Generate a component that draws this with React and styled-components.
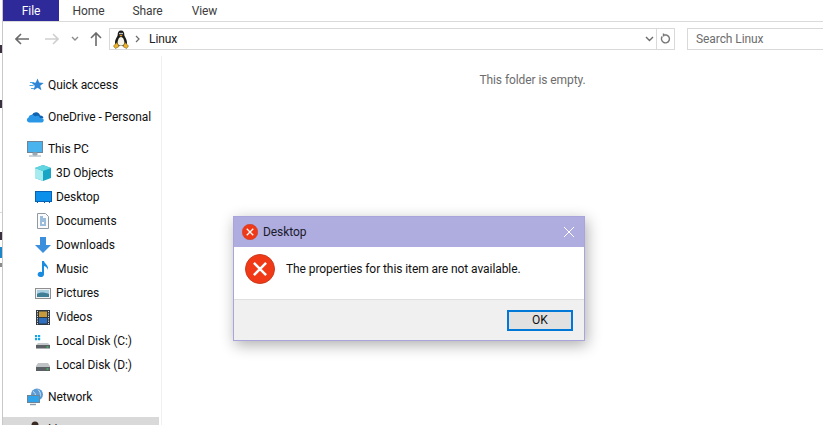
import React from 'react';
import styled, { createGlobalStyle } from 'styled-components';

const Global = createGlobalStyle`
  html, body { margin: 0; padding: 0; background: #fff; overflow: hidden; }
  body { font-family: Roboto, "Noto Sans", "Liberation Sans", sans-serif; letter-spacing: -0.08px; }
  #root { width: 823px; height: 425px; }
`;

const Page = styled.div`
  width: 823px;
  height: 425px;
  position: relative;
  overflow: hidden;
  background: #fff;
  display: flex;
`;

/* slivers of the window behind that stick out on the left */
const Behind = styled.div`
  width: 2px;
  flex: none;
  border-right: 1px solid #c8c8c8;
  background:
    linear-gradient(#3a3040, #3a3040) 0 45px / 2px 8px no-repeat,
    linear-gradient(#3a3040, #3a3040) 0 100px / 2px 8px no-repeat,
    linear-gradient(#dcdcdc, #dcdcdc) 0 212px / 2px 1px no-repeat,
    linear-gradient(#3a3040, #3a3040) 0 232px / 2px 8px no-repeat,
    linear-gradient(#1d86c8, #1d86c8) 0 247px / 2px 11px no-repeat,
    linear-gradient(#8a8a8a, #8a8a8a) 0 263px / 2px 4px no-repeat,
    #fff;
`;

const Explorer = styled.div`
  flex: 1;
  min-width: 0;
  display: flex;
  flex-direction: column;
`;

const Ribbon = styled.div`
  height: 21px;
  display: flex;
  border-bottom: 1px solid #dadada;
`;

const RibbonTab = styled.div`
  width: ${p => p.$w}px;
  display: flex;
  align-items: center;
  justify-content: center;
  font-size: 12px;
  color: ${p => (p.$active ? '#fff' : '#3c3c3c')};
  background: ${p => (p.$active ? '#2e2a9a' : 'transparent')};
`;

const NavBar = styled.div`
  height: 34px;
  display: flex;
  align-items: center;
  padding-left: 1px;
`;

const NavButton = styled.div`
  width: ${p => p.$w}px;
  display: flex;
  align-items: center;
  justify-content: center;
`;

const AddressBox = styled.div`
  width: 566px;
  height: 22px;
  margin-left: 3px;
  box-sizing: border-box;
  border: 1px solid #d9d9d9;
  display: flex;
  align-items: center;
  padding-left: 3px;
`;

const TuxIcon = styled.svg`
  width: 16px;
  height: 19px;
  flex: none;
`;

const CrumbArrow = styled.svg`
  width: 5px;
  height: 8px;
  flex: none;
  margin-left: 6px;
`;

const Crumb = styled.span`
  font-size: 12px;
  color: #222;
  margin-left: 9px;
`;

const AddressEnd = styled.div`
  margin-left: auto;
  display: flex;
  align-items: center;
  height: 100%;
`;

const RefreshCell = styled.div`
  width: 17px;
  height: 100%;
  border-left: 1px solid #d9d9d9;
  margin-left: 2px;
  display: flex;
  align-items: center;
  justify-content: center;
`;

const SearchBox = styled.div`
  flex: 1;
  height: 22px;
  margin-left: 12px;
  box-sizing: border-box;
  border: 1px solid #d9d9d9;
  border-right: none;
  display: flex;
  align-items: center;
  padding-left: 8px;
  font-size: 12px;
  color: #6d6d6d;
`;

const Body = styled.div`
  flex: 1;
  display: flex;
  min-height: 0;
`;

const Sidebar = styled.div`
  width: 159px;
  flex: none;
  border-right: 1px solid #f0f0f0;
  padding-top: 17px;
  box-sizing: border-box;
  overflow: hidden;
`;

const NavItem = styled.div`
  height: 24px;
  display: flex;
  align-items: center;
  padding-left: ${p => (p.$child ? 31 : 23)}px;
  margin-top: ${p => p.$gap || 0}px;
  font-size: 12px;
  color: #111;
  white-space: nowrap;
  background: ${p => (p.$selected ? '#d9d9d9' : 'transparent')};
  width: 156px;
  box-sizing: border-box;
`;

const NavIcon = styled.svg`
  width: 18px;
  height: 18px;
  flex: none;
  margin-right: 4px;
`;

const Content = styled.div`
  flex: 1;
  display: flex;
  justify-content: center;
  padding-top: 17px;
  padding-left: 80px;
  font-size: 12px;
  color: #6d6d6d;
`;

const Dialog = styled.div`
  position: absolute;
  left: 233px;
  top: 216px;
  width: 352px;
  height: 125px;
  box-sizing: border-box;
  border: 1px solid #a9a5dc;
  background: #fff;
  display: flex;
  flex-direction: column;
  box-shadow: 2px 4px 14px rgba(0, 0, 0, 0.32);
`;

const DialogTitle = styled.div`
  height: 30px;
  background: #afacdf;
  display: flex;
  align-items: center;
  padding: 0 9px 0 8px;
  font-size: 12px;
  color: #1a1a2a;
  gap: 5px;
`;

const CloseButton = styled.svg`
  width: 12px;
  height: 12px;
  margin-left: auto;
`;

const DialogBody = styled.div`
  height: 52px;
  display: flex;
  align-items: center;
  padding-left: 11px;
  gap: 11px;
  font-size: 12px;
  color: #111;
  padding-bottom: 8px;
  box-sizing: border-box;
`;

const DialogFooter = styled.div`
  flex: 1;
  background: #f0f0f0;
  border-top: 1px solid #dfdfdf;
  display: flex;
  align-items: center;
  justify-content: flex-end;
  padding-right: 11px;
`;

const OkButton = styled.button`
  width: 66px;
  height: 21px;
  box-sizing: border-box;
  border: 2px solid #0078d7;
  background: #e1e1e1;
  font: inherit;
  font-size: 12px;
  color: #111;
  padding: 0;
`;

const ErrorSvg = styled.svg`
  flex: none;
  width: ${p => p.$size}px;
  height: ${p => p.$size}px;
`;

const ErrorIcon = ({ size }) => (
  <ErrorSvg $size={size} viewBox="0 0 32 32">
    <circle cx="16" cy="16" r="15.5" fill="#f03a17" stroke="#c9371c" />
    <path d="M9.5 9.5 L22.5 22.5 M22.5 9.5 L9.5 22.5" stroke="#fff" strokeWidth="2.6" />
  </ErrorSvg>
);

const Tux = () => (
  <TuxIcon viewBox="0 0 16 19">
    <path d="M8 .5c2.4 0 3.3 2 3.3 4.2 0 2 2.7 4 2.7 8 0 2-1.5 3.3-6 3.3s-6-1.3-6-3.3c0-4 2.7-6 2.7-8C4.7 2.500 5.600.5 8 .5z" fill="#1c1c1c" />
    <path d="M8 7c1.900 0 3.400 3 3.400 5.800 0 2-1.400 3-3.400 3s-3.400-1-3.400-3C4.600 10 6.100 7 8 7z" fill="#f6f3e8" />
    <circle cx="7" cy="3.600" r=".8" fill="#fff" />
    <circle cx="9" cy="3.600" r=".8" fill="#fff" />
    <path d="M6.300 5h3.400L8 6.800z" fill="#e8a31a" />
    <path d="M.5 16l3.500-3.500 2 4-3.500 2zM15.500 16L12 12.500l-2 4 3.500 2z" fill="#eeb32a" stroke="#7b5c0e" strokeWidth=".6" />
  </TuxIcon>
);

const icons = {
  quick: (
    <>
      <path d="M11.500 2.500l1.700 4.100 4.500.3-3.500 2.800 1.200 4.500-3.900-2.500-3.900 2.500 1.200-4.500-3-2.800 4-.3z" fill="#2f86d6" />
      <path d="M4 6.500h4M3.500 9.500h4M5 12.500h3" stroke="#47a8ea" strokeWidth="1.200" />
    </>
  ),
  cloud: (
    <>
      <path d="M6 7a4.200 4.200 0 0 1 8 .5A3 3 0 0 1 17.500 10l-9 1-4-2z" fill="#0f62b0" />
      <path d="M3.500 14.500A2.600 2.600 0 0 1 2.500 9.500a3.600 3.600 0 0 1 6.600-1A3 3 0 0 1 14 10h1.200a2.300 2.300 0 0 1 2.400 3 2.300 2.300 0 0 1-2.400 1.500z" fill="#2a97e6" />
    </>
  ),
  pc: (
    <>
      <rect x="1.500" y="1.500" width="15" height="11" fill="#49b3ee" stroke="#6e8598" />
      <path d="M7 13h4v2H7zM3 16h12" fill="#98a8b4" stroke="#98a8b4" />
    </>
  ),
  cube: (
    <>
      <path d="M9 1l8 3v10l-8 3-8-3V4z" fill="#18a5c6" />
      <path d="M1 4l8 3v10l-8-3z" fill="#a6ecef" />
      <path d="M9 1l8 3-8 3-8-3z" fill="#62d5e0" />
    </>
  ),
  desktop: (
    <>
      <rect x="1.500" y="3.500" width="16" height="10" fill="#0a8fea" stroke="#0662b4" />
      <path d="M3 14.500h1M10 14.500h1M15 14.500h1" stroke="#0662b4" />
    </>
  ),
  doc: (
    <>
      <path d="M3.500 1.500h8l3 3v12h-11z" fill="#fbfbfb" stroke="#8f9aa5" />
      <path d="M6 5h3M6 7h6M6 9h6M6 11h2M10 11h2M6 13h6" stroke="#3a7cb8" />
    </>
  ),
  down: <path d="M6 1h6v8h5l-8 8-8-8h5z" fill="#3b8fdc" />,
  music: <path d="M8 1h2c.5 3 5 4 4 9-.5-2-2-3.500-4-4v8.500a3.200 2.600 0 1 1-2-2.400z" fill="#1a8ce0" />,
  pictures: (
    <>
      <rect x="1.500" y="4.500" width="15" height="10" fill="#eef2f4" stroke="#8f8f8f" />
      <rect x="3" y="6" width="12" height="7" fill="#a8cfe0" />
      <path d="M3 10c3-2 7-2 12 0v3H3z" fill="#3f7f96" />
    </>
  ),
  videos: (
    <>
      <rect x="2" y="2" width="14" height="15" fill="#2f3840" />
      <rect x="5" y="3.500" width="8" height="5.500" fill="#c79a3e" />
      <rect x="5" y="10" width="8" height="5.500" fill="#2f6fc0" />
      <path d="M3.500 3v14M14.500 3v14" stroke="#d8dde0" strokeDasharray="1.200 1.200" />
    </>
  ),
  diskC: (
    <>
      <path d="M1 3h2.200v2.200H1zM4 3h2.200v2.200H4zM1 6h2.200v2.200H1zM4 6h2.200v2.200H4z" fill="#12a5ea" />
      <path d="M4 11h10l2 2v1H2v-1z" fill="#c6c9cb" />
      <rect x="2" y="13" width="14" height="3.500" fill="#5b6064" />
      <rect x="12.500" y="14.500" width="2" height="1" fill="#3fe05b" />
    </>
  ),
  diskD: (
    <>
      <path d="M4 7h10l2 3v2H2v-2z" fill="#bfc3c6" />
      <rect x="2" y="11" width="14" height="4" fill="#5b6064" />
      <rect x="12.500" y="12.500" width="2" height="1" fill="#3fe05b" />
    </>
  ),
  network: (
    <>
      <circle cx="11" cy="6.500" r="6" fill="#5b9bd5" />
      <path d="M7 3.500c2 1 3 3 2 5M12 1.500c2 2 3 4 2 7" stroke="#cfe3f3" fill="none" />
      <rect x="1.500" y="7.500" width="12" height="7" fill="#2fa4ea" stroke="#6e8598" />
      <path d="M4 16.500h6" stroke="#8a9aa6" strokeWidth="1.400" />
    </>
  ),
  user: (
    <>
      <circle cx="9" cy="5" r="3.500" fill="#3a2a20" />
      <path d="M3 17c0-5 3-7 6-7s6 2 6 7z" fill="#444" />
    </>
  ),
};

const navGroups = [
  { label: 'Quick access', icon: 'quick', gap: 0 },
  { label: 'OneDrive - Personal', icon: 'cloud', gap: 8 },
  { label: 'This PC', icon: 'pc', gap: 8 },
  { label: '3D Objects', icon: 'cube', child: true },
  { label: 'Desktop', icon: 'desktop', child: true },
  { label: 'Documents', icon: 'doc', child: true },
  { label: 'Downloads', icon: 'down', child: true },
  { label: 'Music', icon: 'music', child: true },
  { label: 'Pictures', icon: 'pictures', child: true },
  { label: 'Videos', icon: 'videos', child: true },
  { label: 'Local Disk (C:)', icon: 'diskC', child: true },
  { label: 'Local Disk (D:)', icon: 'diskD', child: true },
  { label: 'Network', icon: 'network', gap: 8 },
  { label: 'Linux', icon: 'user', gap: 8, selected: true },
];

export default function App() {
  return (
    <Page>
      <Global />
      <Behind />
      <Explorer>
        <Ribbon>
          <RibbonTab $w={56} $active>File</RibbonTab>
          <RibbonTab $w={59}>Home</RibbonTab>
          <RibbonTab $w={59}>Share</RibbonTab>
          <RibbonTab $w={55}>View</RibbonTab>
        </Ribbon>
        <NavBar>
          <NavButton $w={36}>
            <svg width="14" height="12" viewBox="0 0 14 12"><path d="M6 1L1 6l5 5M1 6h13" fill="none" stroke="#6b6b6b" strokeWidth="1.600" /></svg>
          </NavButton>
          <NavButton $w={24}>
            <svg width="14" height="12" viewBox="0 0 14 12"><path d="M8 1l5 5-5 5M13 6H0" fill="none" stroke="#cfcfcf" strokeWidth="1.600" /></svg>
          </NavButton>
          <NavButton $w={22}>
            <svg width="8" height="6" viewBox="0 0 8 6"><path d="M1 1l3 3 3-3" fill="none" stroke="#8c8c8c" strokeWidth="1.400" /></svg>
          </NavButton>
          <NavButton $w={20}>
            <svg width="12" height="14" viewBox="0 0 12 14"><path d="M1 6l5-5 5 5M6 1v13" fill="none" stroke="#6b6b6b" strokeWidth="1.600" /></svg>
          </NavButton>
          <AddressBox>
            <Tux />
            <CrumbArrow viewBox="0 0 5 8"><path d="M1 1l3 3-3 3" fill="none" stroke="#6b6b6b" strokeWidth="1.200" /></CrumbArrow>
            <Crumb>Linux</Crumb>
            <AddressEnd>
              <svg width="9" height="6" viewBox="0 0 9 6"><path d="M1 1l3.500 3.500L8 1" fill="none" stroke="#6b6b6b" strokeWidth="1.400" /></svg>
              <RefreshCell>
                <svg width="11" height="12" viewBox="0 0 11 12"><path d="M3 2h3.500M6.500 2a4 4 0 1 1-4.300 1.500M3.500 .5V3.500" fill="none" stroke="#777" strokeWidth="1.400" /></svg>
              </RefreshCell>
            </AddressEnd>
          </AddressBox>
          <SearchBox>Search Linux</SearchBox>
        </NavBar>
        <Body>
          <Sidebar>
            {navGroups.map(item => (
              <NavItem key={item.label} $child={item.child} $gap={item.gap} $selected={item.selected}>
                <NavIcon viewBox="0 0 18 18">{icons[item.icon]}</NavIcon>
                {item.label}
              </NavItem>
            ))}
          </Sidebar>
          <Content>This folder is empty.</Content>
        </Body>
      </Explorer>
      <Dialog>
        <DialogTitle>
          <ErrorIcon size={16} />
          Desktop
          <CloseButton viewBox="0 0 12 12">
            <path d="M1 1l10 10M11 1L1 11" stroke="#fff" strokeWidth="1" />
          </CloseButton>
        </DialogTitle>
        <DialogBody>
          <ErrorIcon size={30} />
          The properties for this item are not available.
        </DialogBody>
        <DialogFooter>
          <OkButton>OK</OkButton>
        </DialogFooter>
      </Dialog>
    </Page>
  );
}
